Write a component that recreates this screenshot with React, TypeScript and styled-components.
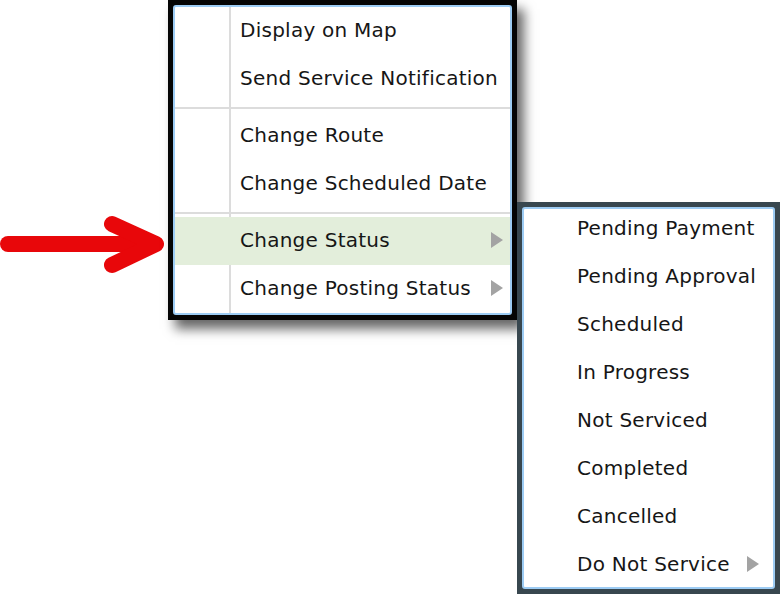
import React from 'react';
import styled, { createGlobalStyle } from 'styled-components';

const GlobalStyle = createGlobalStyle`
  html, body {
    margin: 0;
    padding: 0;
    background: #ffffff;
  }
  body {
    font-family: "DejaVu Sans", "Noto Sans", sans-serif;
    color: #161616;
  }
`;

const Stage = styled.div`
  position: relative;
  width: 780px;
  height: 594px;
  overflow: hidden;
  background: #ffffff;
`;

const Pointer = styled.svg`
  position: absolute;
  left: 0;
  top: 212px;
`;

const MenuFrame = styled.div<{ $left: number; $top: number; $width: number; $height: number; $frame: string; $shadow?: boolean }>`
  position: absolute;
  left: ${(p) => p.$left}px;
  top: ${(p) => p.$top}px;
  width: ${(p) => p.$width}px;
  height: ${(p) => p.$height}px;
  box-sizing: border-box;
  border: 5px solid ${(p) => p.$frame};
  background: ${(p) => p.$frame};
  box-shadow: ${(p) => (p.$shadow ? '7px 9px 11px rgba(0, 0, 0, 0.6)' : 'none')};
`;

const MenuBody = styled.div<{ $gutter?: boolean }>`
  height: 100%;
  box-sizing: border-box;
  border: 2px solid #9dccf4;
  border-radius: 3px;
  background-color: #ffffff;
  background-image: ${(p) =>
    p.$gutter
      ? 'linear-gradient(to right, transparent 54px, #dcdcdc 54px, #dcdcdc 56px, transparent 56px)'
      : 'none'};
  display: flex;
  flex-direction: column;
  overflow: hidden;
`;

const Item = styled.div<{ $active?: boolean; $indent: number; $trail: number; $lift: number }>`
  height: 48px;
  box-sizing: border-box;
  flex: none;
  display: flex;
  align-items: center;
  justify-content: space-between;
  padding: 0 ${(p) => p.$trail}px ${(p) => p.$lift}px ${(p) => p.$indent}px;
  background: ${(p) => (p.$active ? '#e3eedb' : 'transparent')};
  font-size: 20px;
  letter-spacing: 0.25px;
  white-space: nowrap;
`;

const Caret = styled.span`
  width: 0;
  height: 0;
  border-top: 8px solid transparent;
  border-bottom: 8px solid transparent;
  border-left: 12px solid #a3a3a3;
`;

const Separator = styled.div`
  height: 9px;
  flex: none;
  display: flex;
  align-items: center;
`;

const Rule = styled.div`
  height: 2px;
  width: 100%;
  background: #dcdcdc;
`;

type Entry = { label: string; sub?: boolean; active?: boolean } | 'sep';

const mainItems: Entry[] = [
  { label: 'Display on Map' },
  { label: 'Send Service Notification' },
  'sep',
  { label: 'Change Route' },
  { label: 'Change Scheduled Date' },
  'sep',
  { label: 'Change Status', sub: true, active: true },
  { label: 'Change Posting Status', sub: true },
];

const statusItems: Entry[] = [
  { label: 'Pending Payment' },
  { label: 'Pending Approval' },
  { label: 'Scheduled' },
  { label: 'In Progress' },
  { label: 'Not Serviced' },
  { label: 'Completed' },
  { label: 'Cancelled' },
  { label: 'Do Not Service', sub: true },
];

const renderItems = (items: Entry[], indent: number, trail: number, lift: number) =>
  items.map((it, i) =>
    it === 'sep' ? (
      <Separator key={i}>
        <Rule />
      </Separator>
    ) : (
      <Item key={i} $active={it.active} $indent={indent} $trail={trail} $lift={lift}>
        <span>{it.label}</span>
        {it.sub && <Caret />}
      </Item>
    )
  );

export default function App() {
  return (
    <>
      <GlobalStyle />
      <Stage>
        <Pointer width="170" height="64" viewBox="0 0 170 64">
          <g stroke="#e8070a" strokeWidth="16" strokeLinecap="round" strokeLinejoin="round" fill="none">
            <line x1="8" y1="32" x2="150" y2="32" />
            <polyline points="112,12 156,32 112,53" />
          </g>
        </Pointer>

        <MenuFrame $left={168} $top={0} $width={349} $height={320} $frame="#050505" $shadow>
          <MenuBody $gutter>{renderItems(mainItems, 65, 7, 2)}</MenuBody>
        </MenuFrame>

        <MenuFrame $left={517} $top={202} $width={263} $height={392} $frame="#38474f">
          <MenuBody>{renderItems(statusItems, 53, 14, 10)}</MenuBody>
        </MenuFrame>
      </Stage>
    </>
  );
}
